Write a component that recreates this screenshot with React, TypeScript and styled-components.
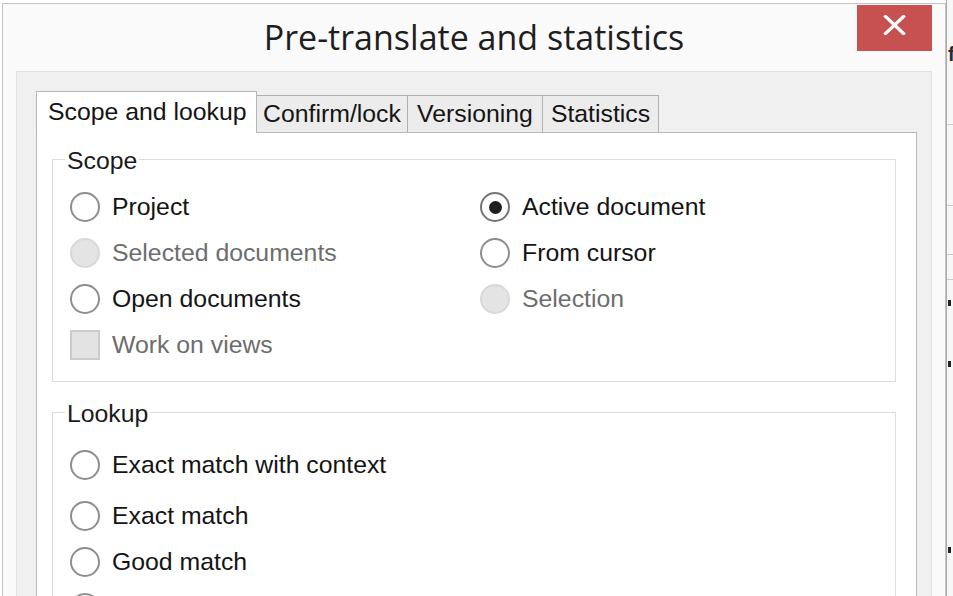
import React from 'react';
import styled, { createGlobalStyle } from 'styled-components';

const GlobalStyle = createGlobalStyle`
  html, body {
    margin: 0;
    padding: 0;
    background: #ffffff;
  }
  body {
    font-family: "Liberation Sans", Arial, sans-serif;
  }
`;

type OptionItem = {
  label: string;
  kind?: 'radio' | 'check';
  checked?: boolean;
  disabled?: boolean;
  spaced?: boolean;
};

const scopeLeft: OptionItem[] = [
  { label: 'Project' },
  { label: 'Selected documents', disabled: true },
  { label: 'Open documents' },
  { label: 'Work on views', kind: 'check', disabled: true },
];

const scopeRight: OptionItem[] = [
  { label: 'Active document', checked: true },
  { label: 'From cursor' },
  { label: 'Selection', disabled: true },
];

// the last one is cut off by the bottom edge, only its circle shows
const lookupOptions: OptionItem[] = [
  { label: 'Exact match with context', spaced: true },
  { label: 'Exact match' },
  { label: 'Good match' },
  { label: '' },
];

const tabs = [
  { label: 'Scope and lookup', width: 221 },
  { label: 'Confirm/lock', width: 152 },
  { label: 'Versioning', width: 136 },
  { label: 'Statistics', width: 117 },
];

const Option = ({ item }: { item: OptionItem }) => (
  <OptionRow $disabled={item.disabled} $spaced={item.spaced}>
    {item.kind === 'check' ? (
      <CheckBox $disabled={item.disabled} />
    ) : (
      <Radio $checked={item.checked} $disabled={item.disabled} />
    )}
    {item.label && <span>{item.label}</span>}
  </OptionRow>
);

const App = () => {
  return (
    <>
      <GlobalStyle />
      <Page>
        <Window>
          <TitleBar>
            <Title>Pre-translate and statistics</Title>
            <CloseButton aria-label="Close">
              <svg width="23" height="20" viewBox="0 0 23 20">
                <path
                  d="M2.5 1.5 L20.5 18.5 M20.5 1.5 L2.5 18.5"
                  stroke="#ffffff"
                  strokeWidth="3.2"
                  strokeLinecap="square"
                  fill="none"
                />
              </svg>
            </CloseButton>
          </TitleBar>
          <Content>
            <TabStrip>
              {tabs.map((t, i) => (
                <Tab key={t.label} $active={i === 0} $width={t.width}>
                  {t.label}
                </Tab>
              ))}
            </TabStrip>
            <Panel>
              <Group $top={9}>
                <Legend>Scope</Legend>
                <Columns>
                  <Column $width={410}>
                    {scopeLeft.map(o => (
                      <Option key={o.label} item={o} />
                    ))}
                  </Column>
                  <Column>
                    {scopeRight.map(o => (
                      <Option key={o.label} item={o} />
                    ))}
                  </Column>
                </Columns>
              </Group>
              <Group $top={14}>
                <Legend>Lookup</Legend>
                <Column>
                  {lookupOptions.map((o, i) => (
                    <Option key={i} item={o} />
                  ))}
                </Column>
              </Group>
            </Panel>
          </Content>
        </Window>
        <Backdrop>
          <BackGlyph>f</BackGlyph>
          <BackLine $gap={60} />
          <BackLine $gap={80} />
          <BackLine $gap={48} />
          <BackLine $gap={24} />
          <BackDot $gap={20} />
          <BackDot $gap={55} />
          <BackDot $gap={180} />
        </Backdrop>
      </Page>
    </>
  );
};

export default App;

const Page = styled.div`
  width: 953px;
  height: 596px;
  overflow: hidden;
  display: flex;
  align-items: flex-start;
  background: #ffffff;
`;

const Window = styled.div`
  flex: 0 0 944px;
  height: 593px;
  margin: 3px 0 0 2px;
  box-sizing: border-box;
  border: 1px solid #c4c4c4;
  border-bottom: none;
  background: #fafafa;
  padding: 0 13px;
  display: flex;
  flex-direction: column;
`;

const TitleBar = styled.div`
  height: 67px;
  flex-shrink: 0;
  display: grid;
  grid-template-columns: 1fr auto 1fr;
  align-items: start;
`;

const Title = styled.div`
  grid-column: 2;
  font-family: "Open Sans", "Noto Sans", sans-serif;
  font-size: 34px;
  line-height: 67px;
  color: #1e1e1e;
  white-space: nowrap;
`;

const CloseButton = styled.div`
  grid-column: 3;
  justify-self: end;
  margin-top: 1px;
  width: 75px;
  height: 46px;
  box-sizing: border-box;
  padding-bottom: 6px;
  background: #c75050;
  display: flex;
  align-items: center;
  justify-content: center;
`;

const Content = styled.div`
  flex: 1;
  display: flex;
  flex-direction: column;
  background: #f0f0f0;
  border: 1px solid #e0e0e0;
  border-bottom: none;
  padding: 19px 14px 0 19px;
`;

const TabStrip = styled.div`
  display: flex;
  align-items: flex-end;
  position: relative;
  z-index: 1;
`;

const Tab = styled.div<{ $active?: boolean; $width: number }>`
  box-sizing: border-box;
  width: ${p => p.$width}px;
  font-size: 24.8px;
  color: #141414;
  white-space: nowrap;
  text-align: ${p => (p.$active ? 'left' : 'center')};
  border: 1px solid ${p => (p.$active ? '#b6b6b6' : '#b0b0b0')};
  border-bottom: none;
  margin-left: ${p => (p.$active ? '0' : '-1px')};
  background: ${p => (p.$active ? '#ffffff' : '#ececec')};
  height: ${p => (p.$active ? '42px' : '37px')};
  line-height: ${p => (p.$active ? '39px' : '36px')};
  padding: ${p => (p.$active ? '0 0 2px 11px' : '0')};
  margin-bottom: ${p => (p.$active ? '-1px' : '0')};
  position: relative;
  z-index: ${p => (p.$active ? 2 : 1)};
`;

const Panel = styled.div`
  flex: 1;
  background: #ffffff;
  border: 1px solid #b9b9b9;
  border-bottom: none;
  padding: 10px 20px 0 15px;
  display: flex;
  flex-direction: column;
  gap: 14px;
`;

const Group = styled.fieldset<{ $top: number }>`
  margin: 0;
  min-width: 0;
  border: 1px solid #dcdcdc;
  padding: ${p => p.$top}px 0 13px 17px;
`;

const Legend = styled.legend`
  margin-left: -5px;
  padding: 4px 2px 0;
  font-size: 24.8px;
  line-height: 28px;
  color: #1a1a1a;
`;

const Columns = styled.div`
  display: flex;
`;

const Column = styled.div<{ $width?: number }>`
  display: flex;
  flex-direction: column;
  width: ${p => (p.$width ? `${p.$width}px` : 'auto')};
`;

const OptionRow = styled.div<{ $disabled?: boolean; $spaced?: boolean }>`
  display: flex;
  align-items: center;
  gap: 12px;
  height: 46px;
  margin-bottom: ${p => (p.$spaced ? '5px' : '0')};
  font-size: 24.8px;
  white-space: nowrap;
  color: ${p => (p.$disabled ? '#6d6d6d' : '#141414')};
`;

const Radio = styled.span<{ $checked?: boolean; $disabled?: boolean }>`
  flex-shrink: 0;
  width: 30px;
  height: 30px;
  box-sizing: border-box;
  border-radius: 50%;
  border: 2px solid
    ${p => (p.$disabled ? '#d8d8d8' : p.$checked ? '#747474' : '#8e8e8e')};
  background: ${p => (p.$disabled ? '#e4e4e4' : '#ffffff')};
  display: flex;
  align-items: center;
  justify-content: center;

  &::after {
    content: '';
    display: ${p => (p.$checked ? 'block' : 'none')};
    width: 13px;
    height: 13px;
    border-radius: 50%;
    background: #1e1e1e;
  }
`;

const CheckBox = styled.span<{ $disabled?: boolean }>`
  flex-shrink: 0;
  width: 30px;
  height: 30px;
  box-sizing: border-box;
  border: 2px solid ${p => (p.$disabled ? '#cbcbcb' : '#8e8e8e')};
  background: ${p => (p.$disabled ? '#e3e3e3' : '#ffffff')};
`;

const Backdrop = styled.div`
  flex: 1;
  height: 596px;
  box-sizing: border-box;
  border-left: 1px solid #a9a9a9;
  background: #f7f7f7;
  display: flex;
  flex-direction: column;
  overflow: hidden;
`;

const BackGlyph = styled.div`
  margin-top: 44px;
  padding-left: 1px;
  font-size: 20px;
  line-height: 20px;
  font-weight: bold;
  color: #2a2a2a;
`;

const BackLine = styled.div<{ $gap: number }>`
  margin-top: ${p => p.$gap}px;
  height: 1px;
  background: #c8c8c8;
`;

const BackDot = styled.div<{ $gap: number }>`
  margin-top: ${p => p.$gap}px;
  margin-left: 1px;
  width: 3px;
  height: 6px;
  background: #222222;
`;
